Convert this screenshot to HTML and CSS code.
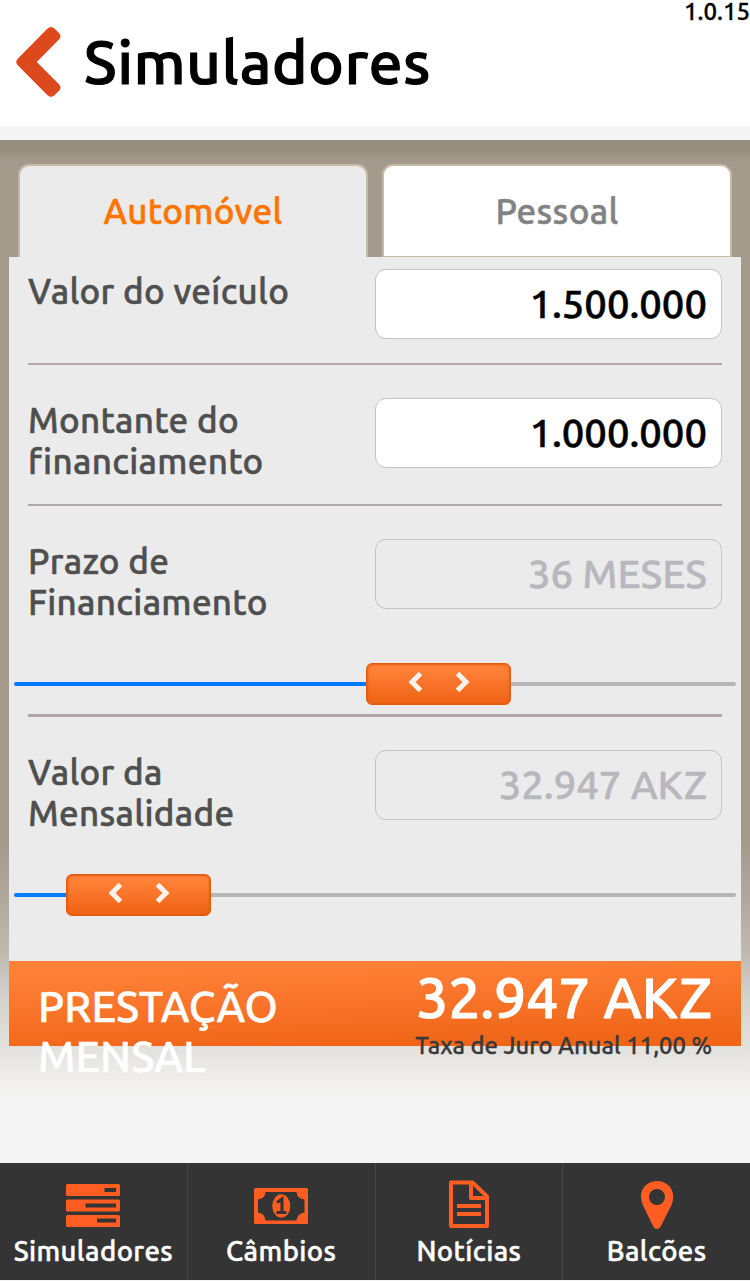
FILE: index.html
```html
<!DOCTYPE html>
<html lang="pt">
<head>
<meta charset="utf-8">
<title>Simuladores</title>
<link rel="stylesheet" href="styles.css">
</head>
<body>
<div class="app">
  <header class="header">
    <svg class="back" width="46" height="72" viewBox="0 0 46 72"><path d="M31.500 2.500Q35-.5 38.500 2.500L43 7Q46 10.300 43 13.600L20.800 36 43 58.200Q46 61.500 43 64.800L38.500 69.300Q35 72.300 31.500 69.300L1.500 39Q-1 36 1.500 33Z" fill="#dc491c"/></svg>
    <h1 class="title">Simuladores</h1>
    <span class="version">1.0.15</span>
  </header>
  <main class="stage">
    <nav class="tabs">
      <a class="tab tab-active">Automóvel</a>
      <a class="tab tab-idle">Pessoal</a>
    </nav>
    <section class="panel">
      <div class="row row-first">
        <div class="label">Valor do veículo</div>
        <div class="field">1.500.000</div>
      </div>
      <div class="row row-second">
        <div class="label">Montante do<br>financiamento</div>
        <div class="field">1.000.000</div>
      </div>
      <div class="row row-term">
        <div class="label">Prazo de<br>Financiamento</div>
        <div class="field field-off">36 MESES</div>
      </div>
      <div class="slider slider-term">
        <div class="track track-done"></div>
        <div class="thumb"><svg width="62" height="22" viewBox="0 0 62 22"><path d="M12.500 2.500 4 11l8.500 8.500M49.500 2.500 58 11l-8.500 8.500" fill="none" stroke="#fff3ec" stroke-width="5"/></svg></div>
        <div class="track track-rest"></div>
      </div>
      <div class="divider"></div>
      <div class="row row-payment">
        <div class="label">Valor da<br>Mensalidade</div>
        <div class="field field-off">32.947 AKZ</div>
      </div>
      <div class="slider slider-payment">
        <div class="track track-done"></div>
        <div class="thumb"><svg width="62" height="22" viewBox="0 0 62 22"><path d="M12.500 2.500 4 11l8.500 8.500M49.500 2.500 58 11l-8.500 8.500" fill="none" stroke="#fff3ec" stroke-width="5"/></svg></div>
        <div class="track track-rest"></div>
      </div>
    </section>
    <section class="total">
      <div class="total-label">PRESTAÇÃO<br>MENSAL</div>
      <div class="total-value">
        <div class="amount">32.947 AKZ</div>
        <div class="rate">Taxa de Juro Anual 11,00 %</div>
      </div>
    </section>
  </main>
  <nav class="bottom">
    <a class="item">
      <svg class="icon" width="54" height="50" viewBox="0 0 54 50"><path fill="#ff5d22" fill-rule="evenodd" d="M1.500 4h51Q54 4 54 5.500v9Q54 16 52.500 16h-51Q0 16 0 14.500v-9Q0 4 1.500 4zM38.500 8v4H50V8zM1.500 19.500h51Q54 19.500 54 21v9q0 1.500-1.500 1.500h-51Q0 31.500 0 30v-9q0-1.500 1.500-1.500zM19.500 23.500v4H50v-4zM1.500 35h51Q54 35 54 36.500v9q0 1.500-1.500 1.500h-51Q0 47 0 45.500v-9Q0 35 1.500 35zM31 38.500v4h19v-4z"/></svg>
      <span>Simuladores</span>
    </a>
    <a class="item">
      <svg class="icon" width="54" height="50" viewBox="0 0 54 50"><path fill="#ff5d22" fill-rule="evenodd" d="M1.500 8h51Q54 8 54 9.500v33Q54 44 52.500 44h-51Q0 44 0 42.500v-33Q0 8 1.500 8zM11.500 12Q11 19 4 19.500v13Q11 33.500 11.500 40.500h31Q43 33.500 50.500 32.500v-13Q43 19 42.500 12z"/><ellipse cx="27.300" cy="26" rx="9" ry="11.800" fill="#ff5d22"/><path d="m23 22.500 5-3.500v13M22.500 32.500h10" fill="none" stroke="#343434" stroke-width="3.200"/></svg>
      <span>Câmbios</span>
    </a>
    <a class="item">
      <svg class="icon" width="54" height="50" viewBox="0 0 54 50"><path fill="none" stroke="#ff5d22" stroke-width="4" stroke-linejoin="round" d="M9 2.500h21.500L45 16.500v29.500H9zM29 2.500V18h16"/><path fill="none" stroke="#ff5d22" stroke-width="4.200" d="M15 26h24M15 34h24"/></svg>
      <span>Notícias</span>
    </a>
    <a class="item">
      <svg class="icon" width="54" height="50" viewBox="0 0 54 50"><path fill="#ff5d22" fill-rule="evenodd" d="M27 1C17.500 1 11 8 11 16.500q0 4.500 1.800 8.500l10.500 21.500Q24.500 49 27 49t3.700-2.500L41.500 25q1.700-4 1.700-8.500C43.200 8 36.500 1 27 1zM27 9a8 8 0 1 1 0 16 8 8 0 0 1 0-16z"/></svg>
      <span>Balcões</span>
    </a>
  </nav>
</div>
</body>
</html>
```
FILE: styles.css
```css
* { box-sizing: border-box; }
body {
  margin: 0; background: #f5f5f5;
  font-family: "Ubuntu", "Noto Sans", sans-serif; font-weight: 500;
  -webkit-text-stroke: .5px currentColor;
}
.app { width: 750px; height: 1281px; display: flex; flex-direction: column; }

.header { height: 126px; display: flex; align-items: flex-start; background: #fff; }
.back { margin: 26px 0 0 16px; flex: none; }
.title { margin: 22px 0 0 22px; font-size: 60px; letter-spacing: .8px; line-height: 80px; font-weight: 500; color: #000; -webkit-text-stroke-width: 1.200px; }
.version { margin-left: auto; font-size: 24px; line-height: 24px; color: #000; -webkit-text-stroke-width: .3px; }

.stage {
  height: 1023px; margin-top: 14px; padding: 25px 9px 0;
  background: linear-gradient(#958c7f 0, #978e80 10px, #a49b8d 22px, #a49b8d 700px, #b0a99c 760px, #c0bbb1 815px, #d5d3cd 860px, #e3e1de 908px, #eeedeb 935px, #f5f5f5 962px);
}
.tabs { display: flex; gap: 14px; padding: 0 9px; height: 92px; }
.tab {
  flex: 1; height: 93px; margin-top: -1px; border: 2px solid #c6b9a5; border-radius: 11px 11px 0 0;
  text-align: center; font-size: 35px; letter-spacing: .3px; line-height: 90px;
}
.tab-active { background: #ebebeb; border-bottom: 0; color: #ff7500; }
.tab-idle { background: #fff; color: #828282; border-bottom-width: 1px; }

.panel { height: 704px; padding: 12px 0 0; background: #ebebeb; display: flex; flex-direction: column; }
.row { margin: 0 19px; display: flex; justify-content: space-between; align-items: flex-start; }
.row-first { height: 96px; border-bottom: 2px solid #aea9a9; }
.row-second { height: 141px; padding-top: 33px; border-bottom: 2px solid #aea9a9; }
.row-term { height: 157px; padding-top: 33px; }
.row-payment { height: 157px; padding-top: 33px; }
.label { font-size: 35px; letter-spacing: .3px; line-height: 41px; color: #4f4f4f; white-space: nowrap; padding-top: 2px; }
.field {
  width: 347px; height: 70px; padding-right: 14px; border: 1px solid #c3c3c3; border-radius: 11px;
  background: #fff; color: #000; font-size: 40px; line-height: 68px; text-align: right;
}
.field-off { background: transparent; color: #b8b7be; }

.slider { margin: 0 5px; height: 42px; display: flex; align-items: center; }
.track { height: 4px; }
.track-done { background: #007aff; border-radius: 2px 0 0 2px; }
.slider-term .track-done { width: 352px; }
.slider-payment .track-done { width: 52px; }
.track-rest { flex: 1; background: #b6b6b6; border-radius: 0 2px 2px 0; }
.thumb {
  width: 145px; height: 42px; padding-bottom: 4px; border: 1px solid #e35c11; border-radius: 6px;
  background: linear-gradient(#ff8138 15%, #f06518 90%); box-shadow: inset 0 0 2px 1px #e35c11;
  display: flex; align-items: center; justify-content: center;
}
.divider { margin: 9px 19px 0; height: 3px; flex: none; background: #aea9a9; }

.total {
  height: 85px; padding: 0 29px; display: flex; justify-content: space-between;
  background: linear-gradient(178deg, #ff8138 12%, #f06518 88%); color: #fff;
}
.total-label { padding-top: 20px; font-size: 42.700px; line-height: 50px; white-space: nowrap; }
.total-value { text-align: right; white-space: nowrap; }
.amount { font-size: 56.800px; line-height: 73px; -webkit-text-stroke-width: 1px; }
.rate { font-size: 23.800px; line-height: 22px; color: #393939; -webkit-text-stroke-width: .3px; }

.bottom { height: 117px; display: flex; background: #343434; }
.item {
  flex: 1; display: flex; flex-direction: column; align-items: center; border-right: 1px solid #464646;
  color: #fff; font-size: 27.500px; letter-spacing: .4px; line-height: 36px;
}
.item:last-child { border-right: 0; }
.icon { margin-top: 17px; margin-bottom: 3px; flex: none; }
```
